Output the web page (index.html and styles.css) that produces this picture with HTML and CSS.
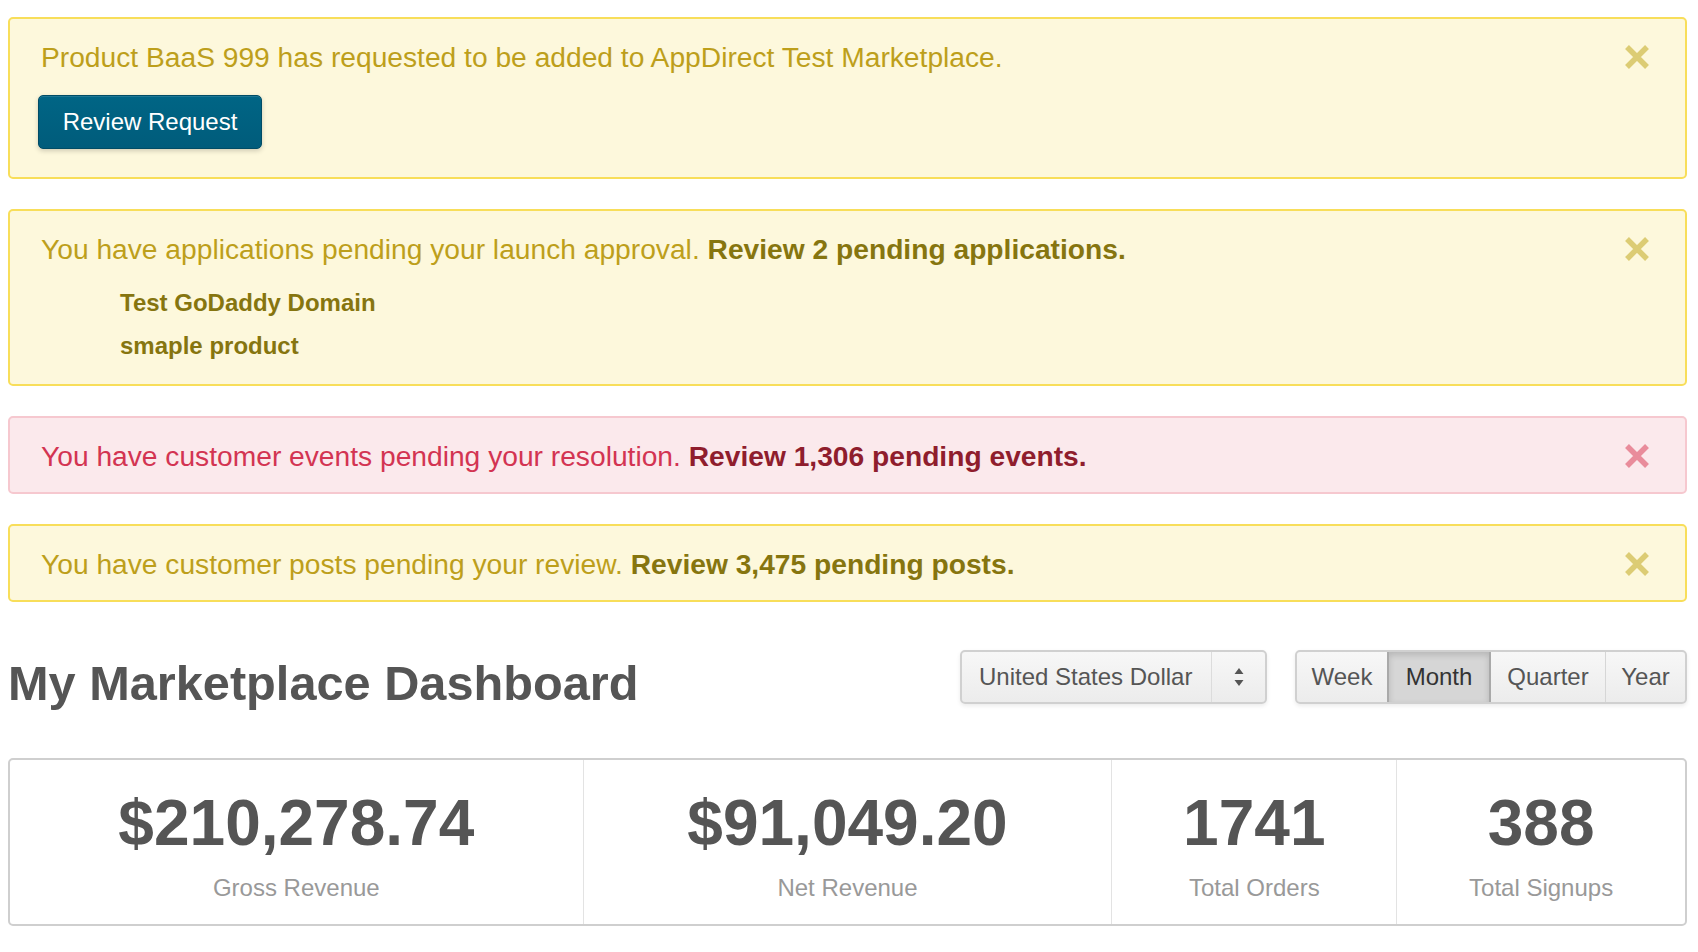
FILE: index.html
```html
<!DOCTYPE html>
<html>
<head>
<meta charset="utf-8">
<title>My Marketplace Dashboard</title>
<link rel="stylesheet" href="styles.css">
</head>
<body>
<div class="page">
  <div class="alert alert-warning alert-first">
    <div class="alert-body">
      <div class="alert-line">Product BaaS 999 has requested to be added to AppDirect Test Marketplace.</div>
      <button class="btn-primary">Review Request</button>
    </div>
    <span class="close close-warning"><svg width="26" height="26" viewBox="0 0 26 26"><path d="M3 3L23 23M23 3L3 23" stroke="currentColor" stroke-width="5.5"/></svg></span>
  </div>

  <div class="alert alert-warning alert-list">
    <div class="alert-body">
      <div class="alert-line">You have applications pending your launch approval. <a class="alert-link">Review 2 pending applications.</a></div>
      <ul class="app-list">
        <li>Test GoDaddy Domain</li>
        <li>smaple product</li>
      </ul>
    </div>
    <span class="close close-warning"><svg width="26" height="26" viewBox="0 0 26 26"><path d="M3 3L23 23M23 3L3 23" stroke="currentColor" stroke-width="5.5"/></svg></span>
  </div>

  <div class="alert alert-danger">
    <div class="alert-body">
      <div class="alert-line">You have customer events pending your resolution. <a class="alert-link">Review 1,306 pending events.</a></div>
    </div>
    <span class="close close-danger"><svg width="26" height="26" viewBox="0 0 26 26"><path d="M3 3L23 23M23 3L3 23" stroke="currentColor" stroke-width="5.5"/></svg></span>
  </div>

  <div class="alert alert-warning">
    <div class="alert-body">
      <div class="alert-line">You have customer posts pending your review. <a class="alert-link">Review 3,475 pending posts.</a></div>
    </div>
    <span class="close close-warning"><svg width="26" height="26" viewBox="0 0 26 26"><path d="M3 3L23 23M23 3L3 23" stroke="currentColor" stroke-width="5.5"/></svg></span>
  </div>

  <div class="dash-header">
    <h1 class="dash-title">My Marketplace Dashboard</h1>
    <div class="dash-controls">
      <div class="select">
        <span class="select-label">United States Dollar</span>
        <span class="select-arrows"><svg width="12" height="22" viewBox="0 0 12 22"><path d="M6 2L10.5 8H1.5Z M6 20L10.5 14H1.5Z" fill="#555"/></svg></span>
      </div>
      <div class="btn-group">
        <span class="seg">Week</span>
        <span class="seg seg-active">Month</span>
        <span class="seg">Quarter</span>
        <span class="seg">Year</span>
      </div>
    </div>
  </div>

  <div class="stats">
    <div class="stat">
      <div class="stat-value">$210,278.74</div>
      <div class="stat-label">Gross Revenue</div>
    </div>
    <div class="stat">
      <div class="stat-value">$91,049.20</div>
      <div class="stat-label">Net Revenue</div>
    </div>
    <div class="stat">
      <div class="stat-value">1741</div>
      <div class="stat-label">Total Orders</div>
    </div>
    <div class="stat">
      <div class="stat-value">388</div>
      <div class="stat-label">Total Signups</div>
    </div>
  </div>
</div>
</body>
</html>
```
FILE: styles.css
```css
* { box-sizing: border-box; }
html, body { margin: 0; padding: 0; background: #fff; }
body { font-family: "Liberation Sans", Arial, Helvetica, sans-serif; }

.page {
  padding: 17px 11px 0 8px;
}

.alert {
  display: flex;
  align-items: flex-start;
  border: 2px solid #f7dc55;
  border-radius: 5px;
  padding: 20px 35px 18px 31px;
  margin-bottom: 30px;
}
.alert-warning {
  background: #fdf8dc;
  border-color: #f8de5a;
  color: #bd9f1b;
}
.alert-danger {
  background: #fbe9ec;
  border-color: #f6c8cf;
  color: #d33452;
}
.alert-first { padding-bottom: 28px; }
.alert-list { padding-bottom: 17px; }

.alert-body { flex: 1; }
.alert-line {
  font-size: 28.2px;
  line-height: 36px;
  height: 36px;
}
.alert-link { font-weight: bold; }
.alert-warning .alert-link { color: #86750f; }
.alert-danger .alert-link { color: #8f1d2d; }

.btn-primary {
  display: block;
  margin-top: 20px;
  margin-left: -3px;
  height: 54px;
  width: 224px;
  padding: 0;
  font-family: "Liberation Sans", Arial, sans-serif;
  font-size: 24px;
  color: #fff;
  background: linear-gradient(#006585, #005c7b);
  border: 1px solid #004c66;
  border-radius: 5px;
  box-shadow: 0 2px 5px rgba(0,0,0,0.18), inset 0 1px 0 rgba(255,255,255,0.12);
}

.app-list {
  list-style: none;
  margin: 14px 0 0 0;
  padding: 0 0 0 79px;
  font-size: 24px;
  font-weight: bold;
  line-height: 43px;
  color: #86750f;
}

.close {
  width: 26px;
  height: 26px;
  margin-top: 5px;
  flex: none;
  display: flex;
}
.close-warning { color: #dccc74; }
.close-danger { color: #e98c9b; }

.dash-header {
  display: flex;
  align-items: flex-start;
  justify-content: space-between;
  margin-top: 48px;
}
.dash-title {
  margin: 0;
  padding-top: 6px;
  font-size: 48.7px;
  line-height: 54px;
  font-weight: bold;
  color: #555;
}
.dash-controls {
  display: flex;
  gap: 28px;
}

.select {
  display: flex;
  width: 307px;
  height: 54px;
  border: 2px solid #d0d0d0;
  border-radius: 5px;
  background: linear-gradient(#f7f7f7, #ececec);
  box-shadow: 0 2px 4px rgba(0,0,0,0.08);
  color: #555;
}
.select-label {
  flex: 1;
  font-size: 24px;
  line-height: 50px;
  padding-left: 17px;
}
.select-arrows {
  width: 54px;
  border-left: 1px solid #dcdcdc;
  display: flex;
  align-items: center;
  justify-content: center;
}

.btn-group {
  display: flex;
  height: 54px;
  border: 2px solid #d0d0d0;
  border-radius: 5px;
  background: linear-gradient(#f7f7f7, #ececec);
  box-shadow: 0 2px 4px rgba(0,0,0,0.08);
  overflow: hidden;
}
.seg {
  font-size: 24px;
  line-height: 50px;
  color: #555;
  text-align: center;
  border-left: 1px solid #d6d6d6;
}
.seg:nth-child(1) { width: 90px; border-left: none; }
.seg:nth-child(2) { width: 104px; }
.seg:nth-child(3) { width: 114px; }
.seg:nth-child(4) { width: 80px; flex: 1; }
.seg-active {
  background: #d6d6d6;
  color: #333;
  border-left: 2px solid #a9a9a9;
  border-right: 2px solid #a9a9a9;
  box-shadow: inset 0 3px 6px rgba(0,0,0,0.15);
}
.seg-active + .seg { border-left: none; }

.stats {
  display: grid;
  grid-template-columns: 575fr 531fr 286fr 290fr;
  margin-top: 48px;
  border: 2px solid #cfcfcf;
  border-radius: 5px;
}
.stat {
  text-align: center;
  padding: 27px 0 21px;
  border-left: 1px solid #e3e3e3;
}
.stat:first-child { border-left: none; }
.stat-value {
  font-size: 64px;
  line-height: 72px;
  font-weight: bold;
  color: #555;
}
.stat-label {
  margin-top: 14px;
  font-size: 24px;
  line-height: 30px;
  color: #999;
}
```
